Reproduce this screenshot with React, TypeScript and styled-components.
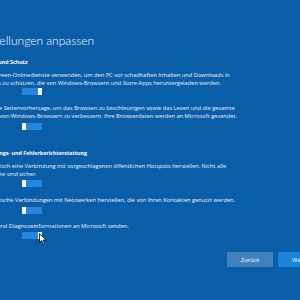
import React from 'react';
import styled, { createGlobalStyle } from 'styled-components';

const GlobalStyle = createGlobalStyle`
  html, body {
    margin: 0;
    padding: 0;
    background: #0a5ea8;
    overflow: hidden;
  }
  body {
    font-family: "Segoe UI", "Open Sans", "Liberation Sans", sans-serif;
    color: #ffffff;
  }
`;

const Page = styled.div`
  position: relative;
  width: 300px;
  height: 300px;
  overflow: hidden;
  background: #0a5ea8;
`;

const Content = styled.div`
  margin-left: -23px;
  padding-top: 32px;
  display: flex;
  flex-direction: column;
  white-space: nowrap;
`;

const Title = styled.h1`
  margin: 0 0 0 -3px;
  font-family: Lato, "Open Sans", sans-serif;
  font-size: 12px;
  line-height: 17px;
  font-weight: 300;
  color: #ffffff;
`;

const Heading = styled.h2<{ $top: number }>`
  margin: ${(p) => p.$top}px 0 0 -2px;
  font-size: 5.3px;
  line-height: 8px;
  font-weight: 700;
`;

const Setting = styled.div<{ $top: number }>`
  margin-top: ${(p) => p.$top}px;
  display: flex;
  flex-direction: column;
  align-items: flex-start;
`;

const Text = styled.p`
  margin: 0;
  font-size: 5.7px;
  line-height: 8px;
  font-weight: 400;
  color: #eef4fb;
`;

const Line = styled.span`
  display: block;
`;

const Track = styled.div<{ $gap: number }>`
  position: relative;
  margin: ${(p) => p.$gap}px 0 0 45px;
  width: 20px;
  height: 7px;
  background: #2686de;
`;

const Knob = styled.div<{ $on: boolean }>`
  position: absolute;
  top: 0;
  ${(p) => (p.$on ? 'right: 0;' : 'left: 0;')}
  width: 4px;
  height: 7px;
  background: #ffffff;
`;

const Footer = styled.div`
  display: flex;
  justify-content: flex-end;
  gap: 5px;
  margin-top: 13px;
  margin-right: -24px;
`;

const Button = styled.button<{ $primary?: boolean }>`
  width: 46px;
  height: 15px;
  padding: 0;
  border: none;
  font-family: inherit;
  font-size: 5.8px;
  color: #ffffff;
  background: ${(p) => (p.$primary ? '#1a84dc' : 'rgba(255, 255, 255, 0.22)')};
`;

const Cursor = styled.svg`
  position: absolute;
  left: 39px;
  top: 233px;
`;

function Toggle({ on, gap = 2 }: { on: boolean; gap?: number }) {
  return (
    <Track $gap={gap}>
      <Knob $on={on} />
    </Track>
  );
}

export default function App() {
  return (
    <Page>
      <GlobalStyle />
      <Content>
        <Title>Einstellungen anpassen</Title>
        <Heading $top={9}>Browser und Schutz</Heading>
        <Setting $top={5}>
          <Text>
            <Line>SmartScreen-Onlinedienste verwenden, um den PC vor schadhaften Inhalten und Downloads in</Line>
            <Line>Websites zu schützen, die von Windows-Browsern und Store-Apps heruntergeladen werden.</Line>
          </Text>
          <Toggle on gap={1} />
        </Setting>
        <Setting $top={9}>
          <Text>
            <Line>Nutze die Seitenvorhersage, um das Browsen zu beschleunigen sowie das Lesen und die gesamte</Line>
            <Line>Qualität von Windows-Browsern zu verbessern. Ihre Browserdaten werden an Microsoft gesendet.</Line>
          </Text>
          <Toggle on={false} gap={3} />
        </Setting>
        <Heading $top={19}>Verbindungs- und Fehlerberichterstattung</Heading>
        <Setting $top={5}>
          <Text>
            <Line>Automatisch eine Verbindung mit vorgeschlagenen öffentlichen Hotspots herstellen. Nicht alle</Line>
            <Line>Netzwerke sind sicher.</Line>
          </Text>
          <Toggle on={false} />
        </Setting>
        <Setting $top={9}>
          <Text>
            <Line>Automatische Verbindungen mit Netzwerken herstellen, die von Ihren Kontakten genutzt werden.</Line>
          </Text>
          <Toggle on={false} gap={3} />
        </Setting>
        <Setting $top={8}>
          <Text>
            <Line>Fehler- und Diagnoseinformationen an Microsoft senden.</Line>
          </Text>
          <Toggle on />
        </Setting>
        <Footer>
          <Button>Zurück</Button>
          <Button $primary>Weiter</Button>
        </Footer>
      </Content>
      <Cursor width="8" height="12" viewBox="0 0 8 12">
        <path d="M0.5 0.5 L0.5 9.5 L2.6 7.6 L4.2 11.2 L5.6 10.6 L4.1 7.1 L7 7.1 Z" fill="#ffffff" stroke="#000000" strokeWidth="0.8" />
      </Cursor>
    </Page>
  );
}
